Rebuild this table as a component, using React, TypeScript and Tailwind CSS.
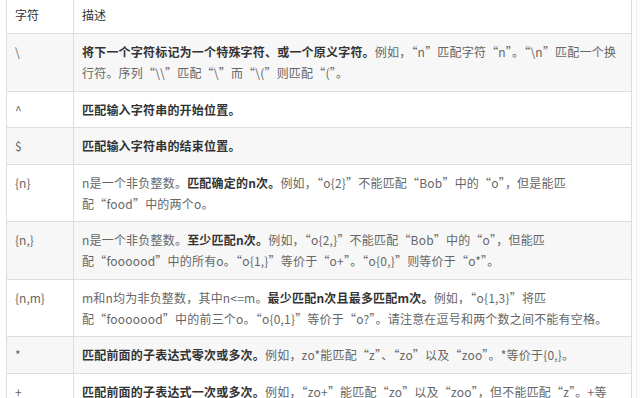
import React from "react";

type Seg = { t: string; b?: boolean };
type Row = { k: string; lines: Seg[][]; gray: boolean };

const rows: Row[] = [
  {
    k: "\\",
    gray: true,
    lines: [
      [
        { t: "将下一个字符标记为一个特殊字符、或一个原义字符。", b: true },
        { t: "例如，“n”匹配字符“n”。“\\n”匹配一个换" },
      ],
      [{ t: "行符。序列“\\\\”匹配“\\”而“\\(”则匹配“(”。" }],
    ],
  },
  { k: "^", gray: false, lines: [[{ t: "匹配输入字符串的开始位置。", b: true }]] },
  { k: "$", gray: true, lines: [[{ t: "匹配输入字符串的结束位置。", b: true }]] },
  {
    k: "{n}",
    gray: false,
    lines: [
      [
        { t: "n是一个非负整数。" },
        { t: "匹配确定的n次。", b: true },
        { t: "例如，“o{2}”不能匹配“Bob”中的“o”，但是能匹" },
      ],
      [{ t: "配“food”中的两个o。" }],
    ],
  },
  {
    k: "{n,}",
    gray: true,
    lines: [
      [
        { t: "n是一个非负整数。" },
        { t: "至少匹配n次。", b: true },
        { t: "例如，“o{2,}”不能匹配“Bob”中的“o”，但能匹" },
      ],
      [{ t: "配“foooood”中的所有o。“o{1,}”等价于“o+”。“o{0,}”则等价于“o*”。" }],
    ],
  },
  {
    k: "{n,m}",
    gray: false,
    lines: [
      [
        { t: "m和n均为非负整数，其中n<=m。" },
        { t: "最少匹配n次且最多匹配m次。", b: true },
        { t: "例如，“o{1,3}”将匹" },
      ],
      [{ t: "配“fooooood”中的前三个o。“o{0,1}”等价于“o?”。请注意在逗号和两个数之间不能有空格。" }],
    ],
  },
  {
    k: "*",
    gray: true,
    lines: [
      [
        { t: "匹配前面的子表达式零次或多次。", b: true },
        { t: "例如，zo*能匹配“z”、“zo”以及“zoo”。*等价于{0,}。" },
      ],
    ],
  },
  {
    k: "+",
    gray: false,
    lines: [
      [
        { t: "匹配前面的子表达式一次或多次。", b: true },
        { t: "例如，“zo+”能匹配“zo”以及“zoo”，但不能匹配“z”。+等" },
      ],
      [{ t: "价于{1,}。" }],
    ],
  },
];

export default function App() {
  return (
    <div
      className="w-[643px] h-[398px] overflow-hidden bg-white flex text-[12px] leading-[21px]"
      style={{ fontFamily: '"Noto Sans CJK SC", "Noto Sans", sans-serif' }}
    >
      <div className="ml-[6px] w-[626px] border-x border-[#dddddd] mt-[-2px] shrink-0 self-start">
        <div className="flex border-b border-[#dddddd] bg-white text-[#333333]">
          <div className="w-[67px] shrink-0 border-r border-[#dddddd] px-[8px] pt-[6px] pb-[8px]">字符</div>
          <div className="flex-1 px-[8px] pt-[6px] pb-[8px]">描述</div>
        </div>
        {rows.map((r, i) => (
          <div
            key={i}
            className={`flex border-b border-[#dddddd] ${r.gray ? "bg-[#f7f7f7]" : "bg-white"}`}
          >
            <div className="w-[67px] shrink-0 border-r border-[#dddddd] px-[8px] pt-[7px] pb-[7.5px] text-[#666666]">
              {r.k}
            </div>
            <div className="flex-1 px-[8px] pt-[7px] pb-[7.5px] text-[#666666] tracking-[0.2px]">
              {r.lines.map((ln, j) => (
                <div key={j} className="whitespace-nowrap">
                  {ln.map((s, m) =>
                    s.b ? (
                      <span key={m} className="font-bold text-[#333333]">
                        {s.t}
                      </span>
                    ) : (
                      <span key={m}>{s.t}</span>
                    )
                  )}
                </div>
              ))}
            </div>
          </div>
        ))}
      </div>
      <div className="ml-[4px] w-[1px] h-full bg-[#eeeeee] shrink-0" />
    </div>
  );
}
